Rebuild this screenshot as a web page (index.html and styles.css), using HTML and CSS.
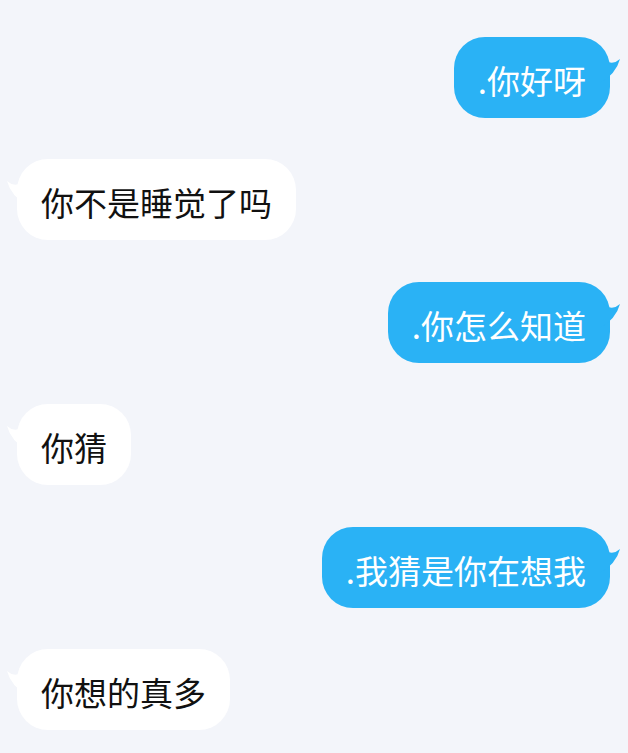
FILE: index.html
```html
<!DOCTYPE html>
<html lang="zh">
<head>
<meta charset="utf-8">
<link rel="stylesheet" href="styles.css">
</head>
<body>
<div class="chat">
  <div class="row me"><div class="bubble">.你好呀<svg class="tail" viewBox="-8 0 22 48" width="22" height="48"><path d="M-8 18 Q2 31 12 22 Q8 37 -8 46 Z"/></svg></div></div>
  <div class="row you"><div class="bubble">你不是睡觉了吗<svg class="tail" viewBox="-8 0 22 48" width="22" height="48"><path d="M-8 18 Q2 31 12 22 Q8 37 -8 46 Z"/></svg></div></div>
  <div class="row me"><div class="bubble">.你怎么知道<svg class="tail" viewBox="-8 0 22 48" width="22" height="48"><path d="M-8 18 Q2 31 12 22 Q8 37 -8 46 Z"/></svg></div></div>
  <div class="row you"><div class="bubble">你猜<svg class="tail" viewBox="-8 0 22 48" width="22" height="48"><path d="M-8 18 Q2 31 12 22 Q8 37 -8 46 Z"/></svg></div></div>
  <div class="row me"><div class="bubble">.我猜是你在想我<svg class="tail" viewBox="-8 0 22 48" width="22" height="48"><path d="M-8 18 Q2 31 12 22 Q8 37 -8 46 Z"/></svg></div></div>
  <div class="row you"><div class="bubble">你想的真多<svg class="tail" viewBox="-8 0 22 48" width="22" height="48"><path d="M-8 18 Q2 31 12 22 Q8 37 -8 46 Z"/></svg></div></div>
</div>
</body>
</html>
```
FILE: styles.css
```css
html, body {
  margin: 0;
  padding: 0;
  background: #f3f5fa;
}
body {
  width: 628px;
  height: 753px;
  overflow: hidden;
  font-family: "Noto Sans CJK SC", "Noto Sans", sans-serif;
}
.chat {
  display: flex;
  flex-direction: column;
  gap: 41.4px;
  padding: 37px 18px 0 17px;
}
.row {
  display: flex;
}
.row.me {
  justify-content: flex-end;
}
.row.you {
  justify-content: flex-start;
}
.bubble {
  position: relative;
  box-sizing: border-box;
  height: 81px;
  line-height: 75px;
  font-size: 33px;
  padding: 6px 24px 0;
  border-radius: 31px;
  white-space: nowrap;
}
.me .bubble {
  background: #2ab2f5;
  color: #ffffff;
}
.you .bubble {
  background: #ffffff;
  color: #111111;
}
.tail {
  position: absolute;
  top: 0;
}
.me .tail {
  right: -12px;
  fill: #2ab2f5;
}
.you .tail {
  left: -12px;
  fill: #ffffff;
  transform: scaleX(-1);
}
```
